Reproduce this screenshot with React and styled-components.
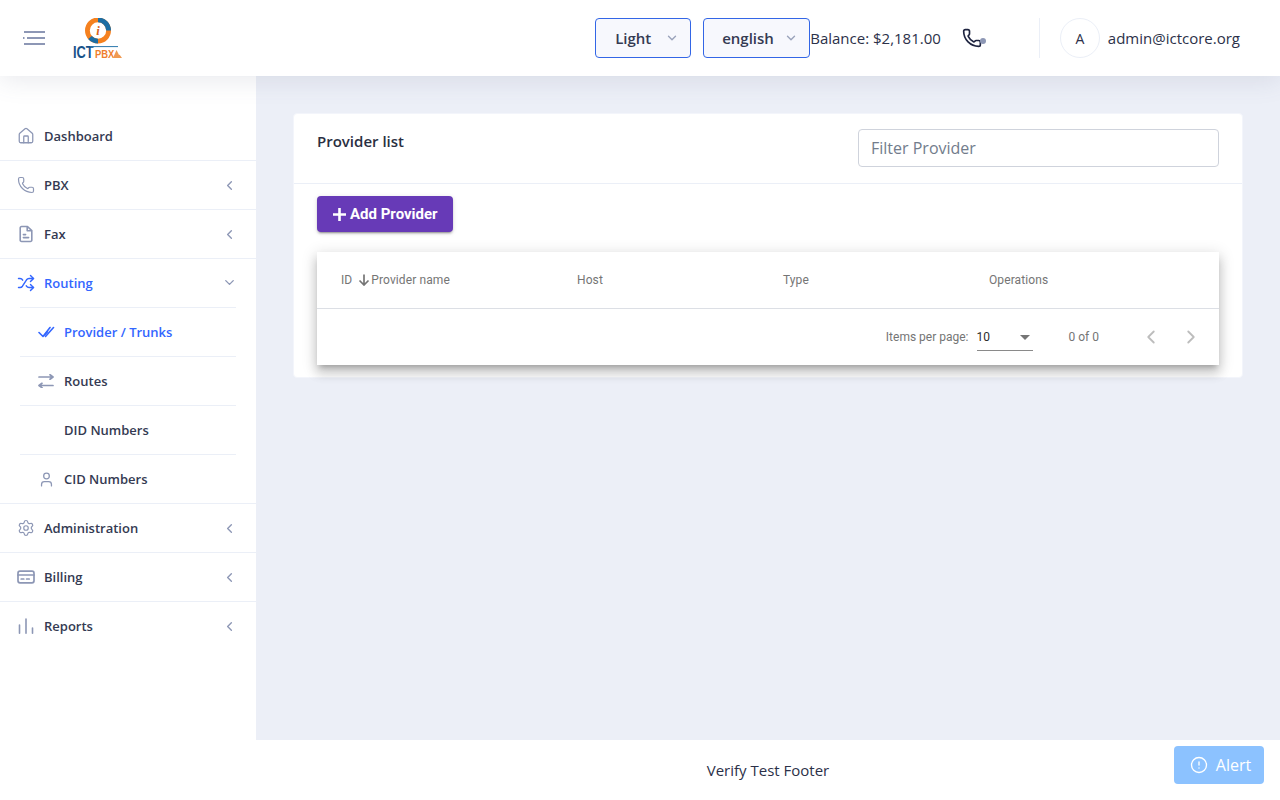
import React from "react";
import styled, { createGlobalStyle } from "styled-components";
import { ChevronDown, ChevronLeft, ChevronRight, CircleAlert, House, Phone, Settings, Shuffle, User } from "lucide-react";

const GlobalStyle = createGlobalStyle`
  * { box-sizing: border-box; }
  html, body { margin: 0; height: 100%; overflow: hidden; }
  body { font-family: "Open Sans", "Noto Sans", sans-serif; color: #2c3149; background: #eceff7; }
`;

const FaxIcon = () => (
  <svg width="18" height="18" viewBox="0 0 18 18" fill="none" stroke="currentColor" strokeWidth="1.6" strokeLinecap="round" strokeLinejoin="round">
    <path d="M10.5 1.5H4.6A1.4 1.4 0 0 0 3.2 3v12a1.4 1.4 0 0 0 1.4 1.5h8.8a1.4 1.4 0 0 0 1.4-1.5V5.6z" />
    <path d="M10.2 1.7v4.1h4.1M6.4 9.6h2.2M6.4 12.6h5.2" />
  </svg>
);

const CardIcon = () => (
  <svg width="18" height="18" viewBox="0 0 18 18" fill="none" stroke="currentColor" strokeWidth="1.7" strokeLinecap="round">
    <rect x="1" y="3.2" width="16" height="11.6" rx="2" />
    <path d="M1 7h16M4.2 11h2.6M9.6 11h2.6" />
  </svg>
);

const BarsIcon = () => (
  <svg width="18" height="18" viewBox="0 0 18 18" fill="none" stroke="currentColor" strokeWidth="1.6" strokeLinecap="round">
    <path d="M2.5 16.2V8M9 16.2V2M15.5 16.2V11" />
  </svg>
);

const DoubleCheckIcon = () => (
  <svg width="17" height="14" viewBox="0 0 17 14" fill="none" stroke="currentColor" strokeWidth="1.6" strokeLinecap="round" strokeLinejoin="round">
    <path d="M1 7.5l4 4L12 2.5M7.5 11.5L15.5 2.5" />
    <path d="M9.5 6.8L6.6 10" />
  </svg>
);

const SwapIcon = () => (
  <svg width="16" height="14" viewBox="0 0 16 14" fill="none" stroke="currentColor" strokeWidth="1.7" strokeLinecap="round" strokeLinejoin="round">
    <path d="M1 3h14M12 .8L15 3l-3 2.2" />
    <path d="M15 11.5H1M4 9.3L1 11.5l3 2.2" />
  </svg>
);

const MenuIcon = () => (
  <svg width="22" height="16" viewBox="0 0 22 16" fill="none" stroke="#8d97b5" strokeWidth="2">
    <path d="M1 2h21M4 8h18M1 14h21" />
    <path d="M0 8h1.5" />
  </svg>
);

const Logo = () => (
  <svg width="54" height="44" viewBox="0 0 54 44">
    <circle cx="26" cy="12.5" r="10.6" fill="none" stroke="#f5811f" strokeWidth="4.8" />
    <path d="M26 1.9a10.6 10.6 0 0 1 10.6 10.6M26 23.1a10.6 10.6 0 0 1-8-3.6" fill="none" stroke="#1c6ea4" strokeWidth="4.8" />
    <circle cx="26" cy="12.5" r="6.4" fill="#fff" />
    <text x="26" y="17" textAnchor="middle" fontFamily="Liberation Serif" fontStyle="italic" fontWeight="700" fontSize="12.5" fill="#d8631c">i</text>
    <text transform="translate(1 40) scale(0.8 1)" fontFamily="Liberation Sans" fontWeight="700" fontSize="16" fill="#17528a">ICT</text>
    <path d="M18 28.6h28" stroke="#2a78ad" strokeWidth="1" />
    <text transform="translate(23 40) scale(0.9 1)" fontFamily="Liberation Sans" fontWeight="700" fontSize="10.5" fill="#ef7f2e">PBX</text>
    <path d="M41 40l3.5-8 4 8zM46 40l1.5-3.5 2.5 3.5z" fill="#f09a52" />
  </svg>
);

const Page = styled.div`
  position: relative;
  display: grid;
  grid-template-columns: 256px 1fr;
  grid-template-rows: 76px 1fr 60px;
  height: 100vh;
`;

const Header = styled.header`
  grid-column: 1 / -1;
  z-index: 2;
  display: flex;
  align-items: center;
  padding: 0 40px 0 23px;
  background: #fff;
  box-shadow: 0 4px 24px rgba(90, 100, 130, 0.14);
`;

const MenuButton = styled.div`
  display: flex;
  width: 49px;
`;

const Brand = styled.div`
  display: flex;
  flex: 1;
  margin-top: 4px;
`;

const ThemeSelect = styled.div`
  display: flex;
  align-items: center;
  justify-content: space-between;
  width: ${(p) => p.$width}px;
  height: 40px;
  margin-right: ${(p) => p.$gap}px;
  padding: 0 11px 0 ${(p) => p.$pad}px;
  font-size: 15px;
  font-weight: 600;
  color: #343a52;
  background: #f7f8fd;
  border: 1px solid #3366e6;
  border-radius: 4px;

  svg { color: #9aa3bb; }
`;

const Balance = styled.span`
  font-size: 15px;
  color: #2c3149;
  white-space: nowrap;
`;

const CallStatus = styled.div`
  position: relative;
  display: flex;
  margin-left: 21px;
  margin-right: 57px;
  color: #1e2440;
`;

const StatusDot = styled.span`
  position: absolute;
  right: -4px;
  bottom: 4px;
  width: 6px;
  height: 6px;
  border-radius: 50%;
  background: #8d97b5;
`;

const UserBox = styled.div`
  display: flex;
  align-items: center;
  height: 40px;
  padding-left: 20px;
  border-left: 1px solid #ebeff7;
`;

const Avatar = styled.div`
  display: flex;
  align-items: center;
  justify-content: center;
  width: 40px;
  height: 40px;
  margin-right: 8px;
  font-size: 14px;
  border: 1px solid #ebeff7;
  border-radius: 50%;
`;

const Email = styled.span`
  font-size: 15px;
  color: #2c3149;
`;

const Sidebar = styled.nav`
  grid-row: 2 / 4;
  padding-top: 36px;
  background: #fff;
`;

const NavRow = styled.div`
  display: flex;
  align-items: center;
  height: ${(p) => (p.$open ? "48px" : "49px")};
  padding: 0 19px 0 17px;
  font-size: 13px;
  font-weight: 600;
  color: ${(p) => (p.$active ? "#3366ff" : "#343a52")};
  border-bottom: 1px solid ${(p) => (p.$open || p.$last ? "transparent" : "#ebeff7")};
`;

const SubList = styled.div`
  border-bottom: 1px solid #ebeff7;
`;

const SubRow = styled.div`
  display: flex;
  align-items: center;
  height: 49px;
  margin: 0 20px;
  font-size: 13px;
  font-weight: 600;
  color: ${(p) => (p.$active ? "#3366ff" : "#343a52")};
  border-top: 1px solid #ebeff7;
`;

const NavIcon = styled.span`
  display: flex;
  align-items: center;
  flex: none;
  width: 27px;
  color: ${(p) => (p.$active ? "#3366ff" : "#8d97b5")};
`;

const SubIcon = styled.span`
  display: flex;
  align-items: center;
  flex: none;
  width: 44px;
  padding-left: 18px;
  color: ${(p) => (p.$active ? "#3366ff" : "#8d97b5")};
`;

const NavCaret = styled.span`
  display: flex;
  margin-left: auto;
  color: #8d97b5;
`;

const Main = styled.main`
  padding: 37px 37px 0;
  min-width: 0;
`;

const Card = styled.section`
  height: 265px;
  background: #fff;
  border: 1px solid #f3f5fb;
  border-radius: 4px;
`;

const CardHead = styled.div`
  display: flex;
  justify-content: space-between;
  height: 70px;
  padding: 15px 23px 0;
  border-bottom: 1px solid #ebeff7;
`;

const CardTitle = styled.h2`
  margin: 2px 0 0;
  font-size: 15px;
  font-weight: 600;
  line-height: 20px;
  color: #2a2f42;
`;

const FilterInput = styled.input`
  width: 361px;
  height: 38px;
  padding: 0 12px;
  font-family: inherit;
  font-size: 16px;
  background: #fff;
  border: 1px solid #cfd3dc;
  border-radius: 4px;
  outline: none;

  &::placeholder { color: #727c8c; opacity: 1; }
`;

const CardBody = styled.div`
  padding: 12px 23px 0;
`;

const AddButton = styled.button`
  display: flex;
  align-items: center;
  gap: 3px;
  height: 36px;
  padding: 0 15px;
  font-family: "Roboto", sans-serif;
  font-size: 15px;
  font-weight: 700;
  color: #fff;
  background: #673ab7;
  border: none;
  border-radius: 4px;
  box-shadow: 0 3px 1px -2px rgba(0, 0, 0, 0.2), 0 2px 2px rgba(0, 0, 0, 0.14), 0 1px 5px rgba(0, 0, 0, 0.12);
`;

const TableCard = styled.div`
  margin-top: 20px;
  background: #fff;
  font-family: "Roboto", sans-serif;
  box-shadow: 0 5px 5px -3px rgba(0, 0, 0, 0.2), 0 8px 10px 1px rgba(0, 0, 0, 0.14), 0 3px 14px 2px rgba(0, 0, 0, 0.12);
`;

const HeadRow = styled.div`
  display: grid;
  grid-template-columns: 236px 206px 206px 1fr;
  align-items: center;
  height: 57px;
  padding-left: 24px;
  font-size: 12px;
  font-weight: 400;
  letter-spacing: 0.1px;
  color: #757575;
  border-bottom: 1px solid #dcdfe5;
`;

const IdHead = styled.div`
  display: flex;
  align-items: center;
`;

const SortIcon = styled.svg`
  margin-left: 6px;
  margin-right: 1px;
`;

const Paginator = styled.div`
  display: flex;
  align-items: center;
  justify-content: flex-end;
  height: 56px;
  padding-right: 8px;
  font-size: 12px;
  color: #757575;
`;

const PageSize = styled.div`
  position: relative;
  display: flex;
  align-items: center;
  width: 56px;
  height: 27px;
  margin-left: 8px;
  font-size: 12px;
  color: #2b2b2b;
  border-bottom: 1px solid #8a8a8a;
`;

const SizeArrow = styled.span`
  position: absolute;
  right: 3px;
  top: 11px;
  border-left: 5px solid transparent;
  border-right: 5px solid transparent;
  border-top: 5px solid #757575;
`;

const RangeLabel = styled.span`
  margin-left: 36px;
  margin-right: 32px;
`;

const PageButton = styled.div`
  display: flex;
  align-items: center;
  justify-content: center;
  width: 40px;
  height: 40px;
  color: #bdbdbd;
`;

const Footer = styled.footer`
  display: flex;
  align-items: center;
  justify-content: center;
  font-size: 15px;
  color: #2c3149;
  background: #fff;
`;

const AlertButton = styled.button`
  position: absolute;
  right: 16px;
  bottom: 16px;
  display: flex;
  align-items: center;
  justify-content: center;
  gap: 8px;
  width: 90px;
  height: 38px;
  padding: 0 0 0 3px;
  font-family: inherit;
  font-size: 16px;
  font-weight: 500;
  color: #fff;
  background: #8cc2ff;
  border: none;
  border-radius: 4px;
`;

const navTop = [
  { label: "Dashboard", icon: <House size={18} strokeWidth={1.7} /> },
  { label: "PBX", icon: <Phone size={18} strokeWidth={1.6} />, caret: true },
  { label: "Fax", icon: <FaxIcon />, caret: true },
];

const navSub = [
  { label: "Provider / Trunks", icon: <DoubleCheckIcon />, active: true },
  { label: "Routes", icon: <SwapIcon /> },
  { label: "DID Numbers" },
  { label: "CID Numbers", icon: <User size={17} strokeWidth={1.8} /> },
];

const navBottom = [
  { label: "Administration", icon: <Settings size={18} strokeWidth={1.6} />, caret: true },
  { label: "Billing", icon: <CardIcon />, caret: true },
  { label: "Reports", icon: <BarsIcon />, caret: true, last: true },
];

const renderItem = (item) => (
  <NavRow key={item.label} $last={item.last}>
    <NavIcon>{item.icon}</NavIcon>
    {item.label}
    {item.caret && (
      <NavCaret>
        <ChevronLeft size={15} strokeWidth={2.2} />
      </NavCaret>
    )}
  </NavRow>
);

export default function App() {
  return (
    <Page>
      <GlobalStyle />
      <Header>
        <MenuButton>
          <MenuIcon />
        </MenuButton>
        <Brand>
          <Logo />
        </Brand>
        <ThemeSelect $width={96} $gap={12} $pad={19}>
          Light
          <ChevronDown size={14} strokeWidth={2.4} />
        </ThemeSelect>
        <ThemeSelect $width={107} $gap={0} $pad={18}>
          english
          <ChevronDown size={14} strokeWidth={2.4} />
        </ThemeSelect>
        <Balance>Balance: $2,181.00</Balance>
        <CallStatus>
          <Phone size={20} strokeWidth={2} />
          <StatusDot />
        </CallStatus>
        <UserBox>
          <Avatar>A</Avatar>
          <Email>admin@ictcore.org</Email>
        </UserBox>
      </Header>

      <Sidebar>
        {navTop.map(renderItem)}
        <NavRow $active $open>
          <NavIcon $active>
            <Shuffle size={18} strokeWidth={1.9} />
          </NavIcon>
          Routing
          <NavCaret>
            <ChevronDown size={15} strokeWidth={2.2} />
          </NavCaret>
        </NavRow>
        <SubList>
          {navSub.map((item) => (
            <SubRow key={item.label} $active={item.active}>
              <SubIcon $active={item.active}>{item.icon}</SubIcon>
              {item.label}
            </SubRow>
          ))}
        </SubList>
        {navBottom.map(renderItem)}
      </Sidebar>

      <Main>
        <Card>
          <CardHead>
            <CardTitle>Provider list</CardTitle>
            <FilterInput placeholder="Filter Provider" />
          </CardHead>
          <CardBody>
            <AddButton>
              <svg width="15" height="15" viewBox="0 0 15 15" stroke="#fff" strokeWidth="2.6">
                <path d="M7.5 1v13M1 7.5h13" />
              </svg>
              Add Provider
            </AddButton>
            <TableCard>
              <HeadRow>
                <IdHead>
                  ID
                  <SortIcon width="12" height="12" viewBox="0 0 12 12" fill="none" stroke="#757575" strokeWidth="1.7">
                    <path d="M6 0.5v10.5M1.5 6.5L6 11l4.5-4.5" />
                  </SortIcon>
                  Provider name
                </IdHead>
                <span>Host</span>
                <span>Type</span>
                <span>Operations</span>
              </HeadRow>
              <Paginator>
                Items per page:
                <PageSize>
                  10
                  <SizeArrow />
                </PageSize>
                <RangeLabel>0 of 0</RangeLabel>
                <PageButton>
                  <ChevronLeft size={22} strokeWidth={2} />
                </PageButton>
                <PageButton>
                  <ChevronRight size={22} strokeWidth={2} />
                </PageButton>
              </Paginator>
            </TableCard>
          </CardBody>
        </Card>
      </Main>

      <Footer>Verify Test Footer</Footer>
      <AlertButton>
        <CircleAlert size={18} strokeWidth={1.8} />
        Alert
      </AlertButton>
    </Page>
  );
}
